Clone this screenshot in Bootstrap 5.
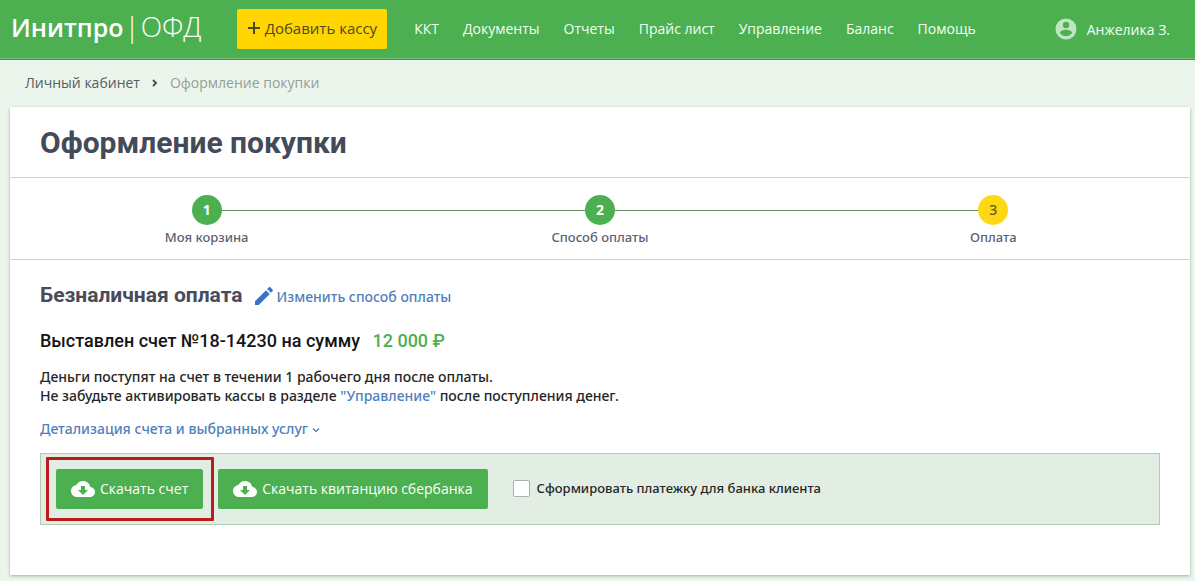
<!DOCTYPE html>
<html lang="ru">
<head>
<meta charset="utf-8">
<meta name="viewport" content="width=device-width, initial-scale=1">
<title>Оформление покупки</title>
<link href="https://cdn.jsdelivr.net/npm/bootstrap@5.3.0/dist/css/bootstrap.min.css" rel="stylesheet">
<style>
  body { font-family: "Open Sans", "Noto Sans", sans-serif; font-size: 14px; line-height: 19px; background: #ebf5eb; color: #262626; }
  a { color: #5080bc; text-decoration: none; }
  a:hover { text-decoration: underline; }
  h1, h2, h3 { font-family: Roboto, sans-serif; font-weight: 700; }

  .topbar { background: #4caf50; border-bottom: 1px solid #3c8c42; box-shadow: inset 0 -1px #7cc47f; padding: 9px 25px 10px 11px; }
  .brand-name { font-size: 28px; line-height: 32px; padding-bottom: 6px; gap: 1px; color: #fff; white-space: nowrap; font-weight: 300; }
  .brand-name b { font-size: 25px; font-weight: 600; }
  .brand-name:hover { color: #fff; text-decoration: none; }
  .btn-add { background: #ffd600; color: #4a4a20; border: 0; border-radius: 2px; height: 40px; margin: 0 27px 0 35px; padding: 0 10px 2px; font-size: 15px; white-space: nowrap; }
  .btn-add:hover { background: #f5cd00; }
  .topbar .nav-link { color: #f4fff4; padding: 0 0 2px; white-space: nowrap; }
  .menu { gap: 24px; }
  .user-link { color: #f4fff4; gap: 10px; white-space: nowrap; }

  .crumbs { padding: 13px 25px 14px; font-size: 14px; line-height: 20px; gap: 11px; }
  .crumbs a { color: #555d60; }
  .crumbs .current { color: #979d9a; }

  .sheet { margin: 0 5px 6px 10px; background: #fff; box-shadow: 0 1px 3px rgba(0, 0, 0, .3); }
  .sheet-head { padding: 16px 30px 14px; border-bottom: 1px solid #d2d2d2; }
  .sheet-head h1 { font-size: 30px; line-height: 40px; color: #444b58; }

  .steps { padding: 17px 0 10px; border-bottom: 1px solid #d2d2d2; }
  .step { position: relative; font-family: "Noto Sans", sans-serif; font-size: 13px; font-weight: 500; line-height: 24px; color: #5c6274; }
  .step-dot { position: relative; z-index: 1; width: 30px; height: 30px; border-radius: 50%; background: #4caf50; color: #fff; font-size: 14px; font-weight: 700; }
  .step.active .step-dot { background: #ffd814; color: #5f5c20; font-weight: 500; }
  .step + .step::before { content: ""; position: absolute; top: 15px; right: 50%; width: 100%; height: 1px; background: #629168; }

  .sheet-body { padding: 21px 30px 50px; font-family: "Noto Sans", sans-serif; font-weight: 500; }
  .sheet-body h2 { font-size: 21px; line-height: 28px; color: #484c5a; }
  .sheet-body h3 { font-size: 18px; line-height: 24px; font-weight: 500; color: #151515; margin: 20px 0 14px; }
  .sheet-body p { margin-bottom: 14px; }
  .edit-link { margin-left: 10px; padding-top: 2px; }
  .details { margin-bottom: 15px; }
  .sum { color: #4caf50; margin-left: 8px; }

  .actions { background: #e2eee3; border: 1px solid #b3cdb5; padding: 15px; }
  .btn-get { background: #4caf50; color: #fff; border: 0; border-radius: 2px; height: 40px; padding: 0 15px 1px; font-family: "Open Sans", sans-serif; font-size: 14px; gap: 5px; white-space: nowrap; }
  .btn-get:hover { background: #43a047; color: #fff; }
  .marked { position: relative; margin-right: 15px; }
  .marked::after { content: ""; position: absolute; inset: -12px -11px -12px -10px; border: 3px solid #b81c1c; border-radius: 1px; pointer-events: none; }
  .client-check { font-size: 13px; gap: 7px; margin-left: 25px; padding-bottom: 2px; }
  .client-check .form-check-input { width: 17px; height: 17px; margin: 0; border: 1px solid #a9b3aa; border-radius: 2px; }
</style>
</head>
<body>
<header class="topbar d-flex align-items-center">
  <a class="brand-name d-flex align-items-baseline" href="#"><b>Инитпро</b><span>|</span><span>ОФД</span></a>
  <button type="button" class="btn btn-add d-flex align-items-center">
    <svg width="14" height="14" viewBox="0 0 14 14" class="me-1" aria-hidden="true"><path d="M7 1v12M1 7h12" stroke="#4a4a20" stroke-width="2" fill="none"/></svg>
    Добавить кассу
  </button>
  <nav>
    <ul class="nav menu flex-nowrap">
      <li><a class="nav-link" href="#">ККТ</a></li>
      <li><a class="nav-link" href="#">Документы</a></li>
      <li><a class="nav-link" href="#">Отчеты</a></li>
      <li><a class="nav-link" href="#">Прайс лист</a></li>
      <li><a class="nav-link" href="#">Управление</a></li>
      <li><a class="nav-link" href="#">Баланс</a></li>
      <li><a class="nav-link" href="#">Помощь</a></li>
    </ul>
  </nav>
  <a class="user-link d-flex align-items-center ms-auto" href="#">
    <svg width="22" height="22" viewBox="0 0 22 22" aria-hidden="true"><circle cx="11" cy="11" r="10.5" fill="#c0e6c1"/><circle cx="11" cy="7" r="3.2" fill="#4caf50"/><path d="M4.8 14.7c.4-2 4-3 6.200-3s5.800 1 6.200 3c-1.400 2.200-3.600 3.400-6.200 3.400s-4.800-1.200-6.200-3.400z" fill="#4caf50"/></svg>
    Анжелика З.
  </a>
</header>

<nav class="crumbs d-flex align-items-center" aria-label="Навигация">
  <a href="#">Личный кабинет</a>
  <svg width="8" height="10" viewBox="0 0 8 10" aria-hidden="true"><path d="M2 2l3 3-3 3" stroke="#454d4a" stroke-width="1.800" fill="none"/></svg>
  <span class="current">Оформление покупки</span>
</nav>

<main class="sheet">
  <div class="sheet-head"><h1 class="m-0">Оформление покупки</h1></div>

  <div class="steps row g-0 text-center">
    <div class="step col-4"><div class="step-dot d-flex align-items-center justify-content-center mx-auto">1</div>Моя корзина</div>
    <div class="step col-4"><div class="step-dot d-flex align-items-center justify-content-center mx-auto">2</div>Способ оплаты</div>
    <div class="step active col-4"><div class="step-dot d-flex align-items-center justify-content-center mx-auto">3</div>Оплата</div>
  </div>

  <div class="sheet-body">
    <div class="d-flex align-items-center">
      <h2 class="m-0">Безналичная оплата</h2>
      <a class="edit-link d-flex align-items-center" href="#">
        <svg width="24" height="24" viewBox="0 0 24 24" fill="#3b73c4" aria-hidden="true"><path d="M3 17.250V21h3.750L17.810 9.940l-3.750-3.750L3 17.250zM20.710 7.040c.39-.39.39-1.020 0-1.410l-2.340-2.340c-.39-.39-1.020-.39-1.410 0l-1.830 1.830 3.750 3.750 1.830-1.830z"/></svg>
        Изменить способ оплаты
      </a>
    </div>
    <h3>Выставлен счет №18-14230 на сумму <span class="sum">12 000 ₽</span></h3>
    <p>Деньги поступят на счет в течении 1 рабочего дня после оплаты.<br>
      Не забудьте активировать кассы в разделе <a href="#">"Управление"</a> после поступления денег.</p>
    <div class="details">
      <a href="#">Детализация счета и выбранных услуг <svg width="8" height="6" viewBox="0 0 8 6" aria-hidden="true"><path d="M1 1.500l3 3 3-3" stroke="#4a7ab8" stroke-width="1.200" fill="none"/></svg></a>
    </div>

    <div class="actions d-flex flex-wrap align-items-center">
      <button type="button" class="btn btn-get marked d-flex align-items-center">
        <svg width="24" height="16" viewBox="0 4 24 16" fill="#fff" aria-hidden="true"><path d="M19.350 10.040C18.670 6.590 15.640 4 12 4 9.110 4 6.600 5.640 5.350 8.040 2.340 8.360 0 10.910 0 14c0 3.310 2.690 6 6 6h13c2.760 0 5-2.240 5-5 0-2.640-2.050-4.780-4.650-4.960zM17 13l-5 5-5-5h3V9h4v4h3z"/></svg>
        Скачать счет
      </button>
      <button type="button" class="btn btn-get d-flex align-items-center">
        <svg width="24" height="16" viewBox="0 4 24 16" fill="#fff" aria-hidden="true"><path d="M19.350 10.040C18.670 6.590 15.640 4 12 4 9.110 4 6.600 5.640 5.350 8.040 2.340 8.360 0 10.910 0 14c0 3.310 2.690 6 6 6h13c2.760 0 5-2.240 5-5 0-2.640-2.050-4.780-4.650-4.960zM17 13l-5 5-5-5h3V9h4v4h3z"/></svg>
        Скачать квитанцию сбербанка
      </button>
      <div class="client-check d-flex align-items-center">
        <input class="form-check-input" type="checkbox" id="bankClient">
        <label for="bankClient">Сформировать платежку для банка клиента</label>
      </div>
    </div>
  </div>
</main>
<script src="https://cdn.jsdelivr.net/npm/bootstrap@5.3.0/dist/js/bootstrap.bundle.min.js"></script>
</body>
</html>
